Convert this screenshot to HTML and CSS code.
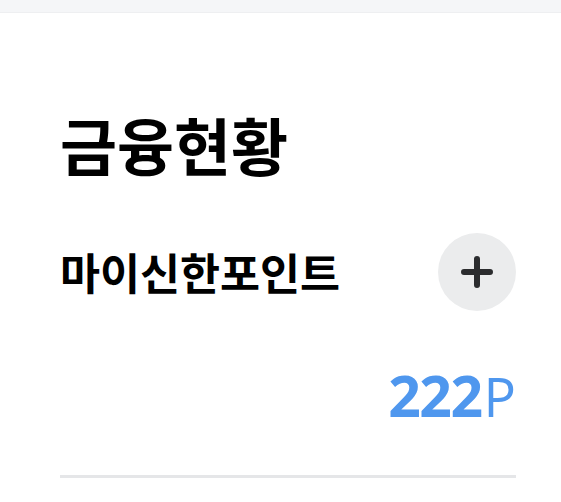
FILE: index.html
```html
<!DOCTYPE html>
<html lang="ko">
<head>
<meta charset="utf-8">
<link rel="stylesheet" href="styles.css">
</head>
<body>
<div class="topband"></div>
<section class="finance">
  <h1 class="title">금융현황</h1>
  <div class="row">
    <h2 class="subtitle">마이신한포인트</h2>
    <button class="add" type="button" aria-label="추가">
      <svg width="32" height="32" viewBox="0 0 32 32"><path d="M16 3V29M3 16H29" stroke="#2b2c2e" stroke-width="6" stroke-linecap="round" fill="none"/></svg>
    </button>
  </div>
  <div class="points"><span class="num">222</span><span class="unit">P</span></div>
  <div class="divider"></div>
</section>
</body>
</html>
```
FILE: styles.css
```css
html, body { margin: 0; padding: 0; background: #fff; }
body { font-family: "Noto Sans CJK KR", "Noto Sans", sans-serif; color: #000; }
.topband { height: 12px; background: #f5f6f8; border-bottom: 1px solid #eeeff1; }
.finance { padding: 0 45px 0 60px; }
.title { margin: 0; padding-top: 100px; font-size: 62px; line-height: 1; font-weight: 700; }
.row { display: flex; justify-content: space-between; align-items: center; margin-top: 58px; }
.subtitle { margin: 0; font-size: 43.5px; line-height: 1; font-weight: 700; }
.add { width: 78px; height: 78px; border-radius: 50%; border: 0; background: #ebeced; padding: 0; display: flex; align-items: center; justify-content: center; }
.points { display: flex; justify-content: flex-end; align-items: baseline; margin-top: 56px; color: #4f97ee; font-family: "Open Sans", "Noto Sans", sans-serif; }
.num { font-size: 57px; font-weight: 700; line-height: 1; letter-spacing: -1.5px; }
.unit { font-size: 54px; font-weight: 400; line-height: 1; margin-left: 2px; }
.divider { height: 3px; background: #e5e6e8; margin-top: 51px; }
```
